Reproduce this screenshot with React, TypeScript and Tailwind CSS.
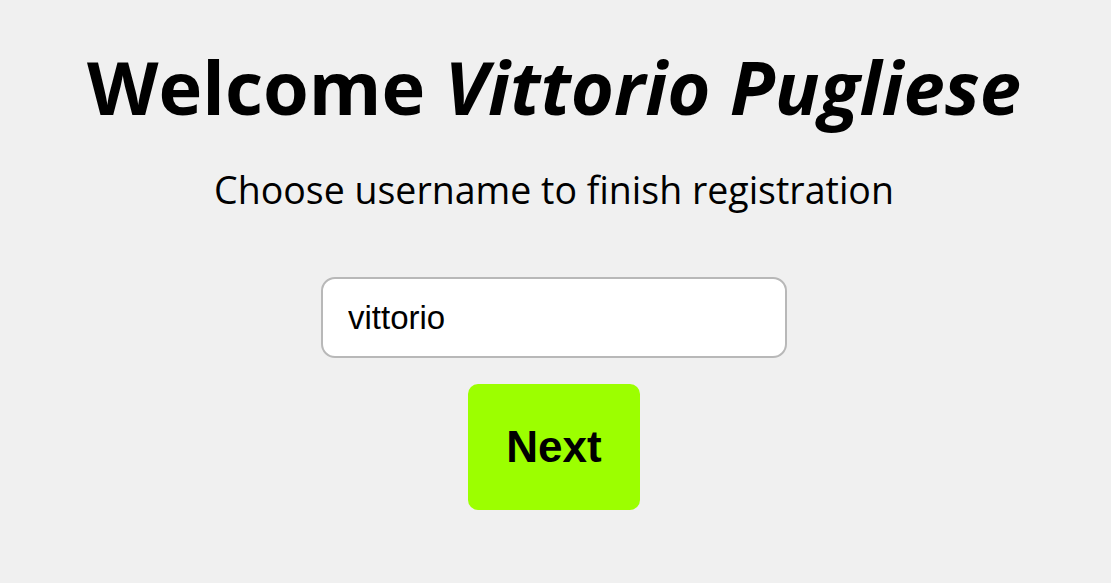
export default function App() {
  return (
    <div className="min-h-screen w-full bg-[#f0f0f0] flex flex-col items-center pt-[42px] pr-[3px]">
      <h1 className="text-[74px] leading-[90px] font-bold text-black font-['Open_Sans',sans-serif]">
        Welcome <em>Vittorio Pugliese</em>
      </h1>
      <p className="mt-[36px] text-[37.5px] leading-[44px] text-black font-['Open_Sans',sans-serif]">
        Choose username to finish registration
      </p>
      <input
        type="text"
        defaultValue="vittorio"
        className="mt-[65px] w-[466px] h-[81px] bg-white border-2 border-[#b8b8b8] rounded-[14px] px-[25px] text-[33px] text-black font-['Liberation_Sans',Arial,sans-serif] outline-none"
      />
      <button className="mt-[26px] w-[172px] h-[126px] bg-[#9cff00] rounded-[10px] text-[44px] font-bold text-black font-['Liberation_Sans',Arial,sans-serif]">
        Next
      </button>
    </div>
  );
}
